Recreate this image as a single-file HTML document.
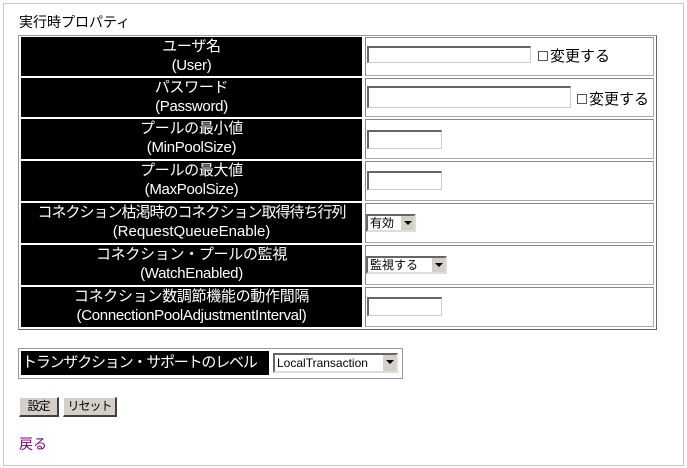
<!DOCTYPE html>
<html><head><meta charset="utf-8"><style>
body{margin:0;width:687px;height:468px;background:#fff;font-family:"Liberation Sans","Noto Sans CJK JP",sans-serif;position:relative;overflow:hidden}
.frame{position:absolute;left:3px;top:3px;width:679px;height:461px;border:1px solid #c8c8c8}
.a{position:absolute}
.t{left:18px;top:35px;width:637px;height:293px;border:1px solid #999;border-right-color:#666;border-bottom-color:#666}
.k{position:absolute;left:21px;width:341px;background:#000;color:#fff;text-align:center;font-size:15px;line-height:19px;white-space:nowrap;letter-spacing:-0.3px}
.v{position:absolute;left:365px;width:287px;border:1px solid #aaa;border-top-color:#888;border-left-color:#888;background:#fff}
.in{position:absolute;height:17px;border:1px solid #ccc;border-top:2px solid #666;border-left:2px solid #666;background:#fff;box-sizing:border-box}
.cb{position:absolute;width:8px;height:8px;border:1px solid #555;background:#fff}
.lab{position:absolute;font-size:15px;color:#000}
.sel{position:absolute;height:18px;border:2px solid #666;border-right-color:#ddd;border-bottom-color:#ddd;box-sizing:border-box;background:#fff;font-size:12px;line-height:14px;padding-left:2px;white-space:nowrap}
.sel i{position:absolute;right:0;top:0;width:13px;height:14px;background:#d4d0c8;border-left:1px solid #fff}
.sel i:after{content:"";position:absolute;left:3px;top:5px;border:4px solid transparent;border-top:4px solid #000;border-bottom:0}
.btn{position:absolute;top:397px;height:20px;background:#d4d0c8;border:1px solid #fff;border-right:2px solid #404040;border-bottom:2px solid #404040;box-sizing:border-box;font-size:12px;line-height:17px;text-align:center;white-space:nowrap;letter-spacing:-1px}
</style></head><body>
<div class="frame"></div>
<div class="a" style="left:19px;top:12px;font-size:14px">実行時プロパティ</div>
<div class="a t"></div>

<div class="k" style="top:37px;height:39px">ユーザ名<br>(User)</div>
<div class="v" style="top:37px;height:37px"></div>
<div class="in" style="left:367px;top:46px;width:164px"></div>
<div class="cb" style="left:538px;top:51px"></div><div class="lab" style="left:550px;top:45px">変更する</div>

<div class="k" style="top:78px;height:39px">パスワード<br>(Password)</div>
<div class="v" style="top:78px;height:37px"></div>
<div class="in" style="left:367px;top:86px;width:204px;height:22px"></div>
<div class="cb" style="left:577px;top:94px"></div><div class="lab" style="left:589px;top:88px">変更する</div>

<div class="k" style="top:119px;height:40px">プールの最小値<br>(MinPoolSize)</div>
<div class="v" style="top:119px;height:38px"></div>
<div class="in" style="left:367px;top:130px;width:75px;height:19px"></div>

<div class="k" style="top:161px;height:40px">プールの最大値<br>(MaxPoolSize)</div>
<div class="v" style="top:161px;height:38px"></div>
<div class="in" style="left:367px;top:171px;width:75px;height:19px"></div>

<div class="k" style="top:203px;height:40px;letter-spacing:-1px">コネクション枯渇時のコネクション取得待ち行列<br><span style="letter-spacing:0">(RequestQueueEnable)</span></div>
<div class="v" style="top:203px;height:38px"></div>
<div class="sel" style="left:366px;top:214px;width:50px">有効<i></i></div>

<div class="k" style="top:245px;height:40px">コネクション・プールの監視<br>(WatchEnabled)</div>
<div class="v" style="top:245px;height:38px"></div>
<div class="sel" style="left:366px;top:256px;width:81px">監視する<i></i></div>

<div class="k" style="top:287px;height:40px">コネクション数調節機能の動作間隔<br>(ConnectionPoolAdjustmentInterval)</div>
<div class="v" style="top:287px;height:38px"></div>
<div class="in" style="left:367px;top:297px;width:75px;height:19px"></div>

<div class="a" style="left:18px;top:348px;width:383px;height:29px;border:1px solid #999"></div>
<div class="k" style="left:21px;top:351px;width:247px;height:24px;line-height:24px;font-size:15px;text-align:left;padding-left:1px;letter-spacing:-1.2px;overflow:hidden">トランザクション・サポートのレベル</div>
<div class="sel" style="left:273px;top:353px;width:125px;height:20px;line-height:16px">LocalTransaction<i style="height:16px"></i></div>

<div class="btn" style="left:19px;width:40px">設定</div>
<div class="btn" style="left:63px;width:54px">リセット</div>
<div class="a" style="left:19px;top:434px;font-size:14px;color:#800080">戻る</div>
</body></html>
